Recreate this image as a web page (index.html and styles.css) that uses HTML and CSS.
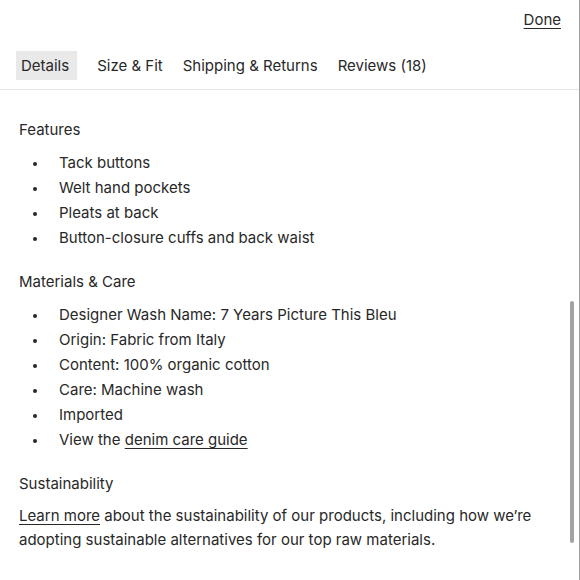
FILE: index.html
```html
<!DOCTYPE html>
<html lang="en">
<head>
<meta charset="utf-8">
<title>Details</title>
<link rel="stylesheet" href="styles.css">
</head>
<body>
<div class="panel">
  <div class="topbar">
    <a class="done" href="#">Done</a>
  </div>
  <nav class="tabs">
    <span class="tab active">Details</span>
    <span class="tab">Size &amp; Fit</span>
    <span class="tab">Shipping &amp; Returns</span>
    <span class="tab">Reviews (18)</span>
  </nav>
  <div class="content">
    <section class="block">
      <h3 class="heading">Features</h3>
      <ul class="list">
        <li>Tack buttons</li>
        <li>Welt hand pockets</li>
        <li>Pleats at back</li>
        <li>Button-closure cuffs and back waist</li>
      </ul>
    </section>
    <section class="block">
      <h3 class="heading">Materials &amp; Care</h3>
      <ul class="list">
        <li>Designer Wash Name: 7 Years Picture This Bleu</li>
        <li>Origin: Fabric from Italy</li>
        <li>Content: 100% organic cotton</li>
        <li>Care: Machine wash</li>
        <li>Imported</li>
        <li>View the <a href="#" class="link">denim care guide</a></li>
      </ul>
    </section>
    <section class="block">
      <h3 class="heading">Sustainability</h3>
      <p class="para"><a href="#" class="link">Learn more</a> about the sustainability of our products, including how we’re adopting sustainable alternatives for our top raw materials.</p>
    </section>
  </div>
  <div class="scrollbar"><div class="thumb"></div></div>
</div>
</body>
</html>
```
FILE: styles.css
```css
html, body {
  margin: 0;
  padding: 0;
  background: #fff;
}
body {
  font-family: "Inter", "Liberation Sans", sans-serif;
  font-size: 15px;
  color: #282828;
  width: 580px;
  height: 580px;
  overflow: hidden;
}
.panel {
  position: relative;
  width: 580px;
  height: 580px;
  box-sizing: border-box;
  border-right: 1px solid #a0a0a0;
}
.topbar {
  display: flex;
  justify-content: flex-end;
  height: 38px;
  padding: 0 18px 0 0;
  align-items: center;
}
.done {
  color: #282828;
  text-decoration: underline;
  text-underline-offset: 3px;
}
.tabs {
  display: flex;
  align-items: center;
  padding: 13px 0 9px 16px;
  gap: 10px;
  border-bottom: 1px solid #e6e6e6;
}
.tab {
  display: inline-flex;
  align-items: center;
  height: 29px;
  padding: 0 5px;
}
.tab.active {
  background: #e9e9e9;
  padding-right: 8px;
  margin-right: 5px;
}
.content {
  padding: 28px 20px 0 19px;
}
.block {
  margin-bottom: 20px;
}
.heading {
  margin: 0 0 8px;
  font-weight: normal;
  font-size: 15px;
  line-height: 24px;
}
.list {
  margin: 0;
  padding: 0 0 0 40px;
  list-style: none;
}
.list li {
  position: relative;
  line-height: 25px;
}
.list li::before {
  content: "";
  position: absolute;
  left: -26px;
  top: 12px;
  width: 4px;
  height: 4px;
  border-radius: 50%;
  background: #282828;
}
.link {
  color: #282828;
  text-decoration: underline;
  text-underline-offset: 3px;
}
.para {
  margin: 0;
  line-height: 24px;
}
.scrollbar {
  position: absolute;
  right: 5px;
  top: 301px;
  width: 4px;
  height: 242px;
}
.thumb {
  width: 100%;
  height: 100%;
  border-radius: 2px;
  background: #a3a3a3;
}
```
